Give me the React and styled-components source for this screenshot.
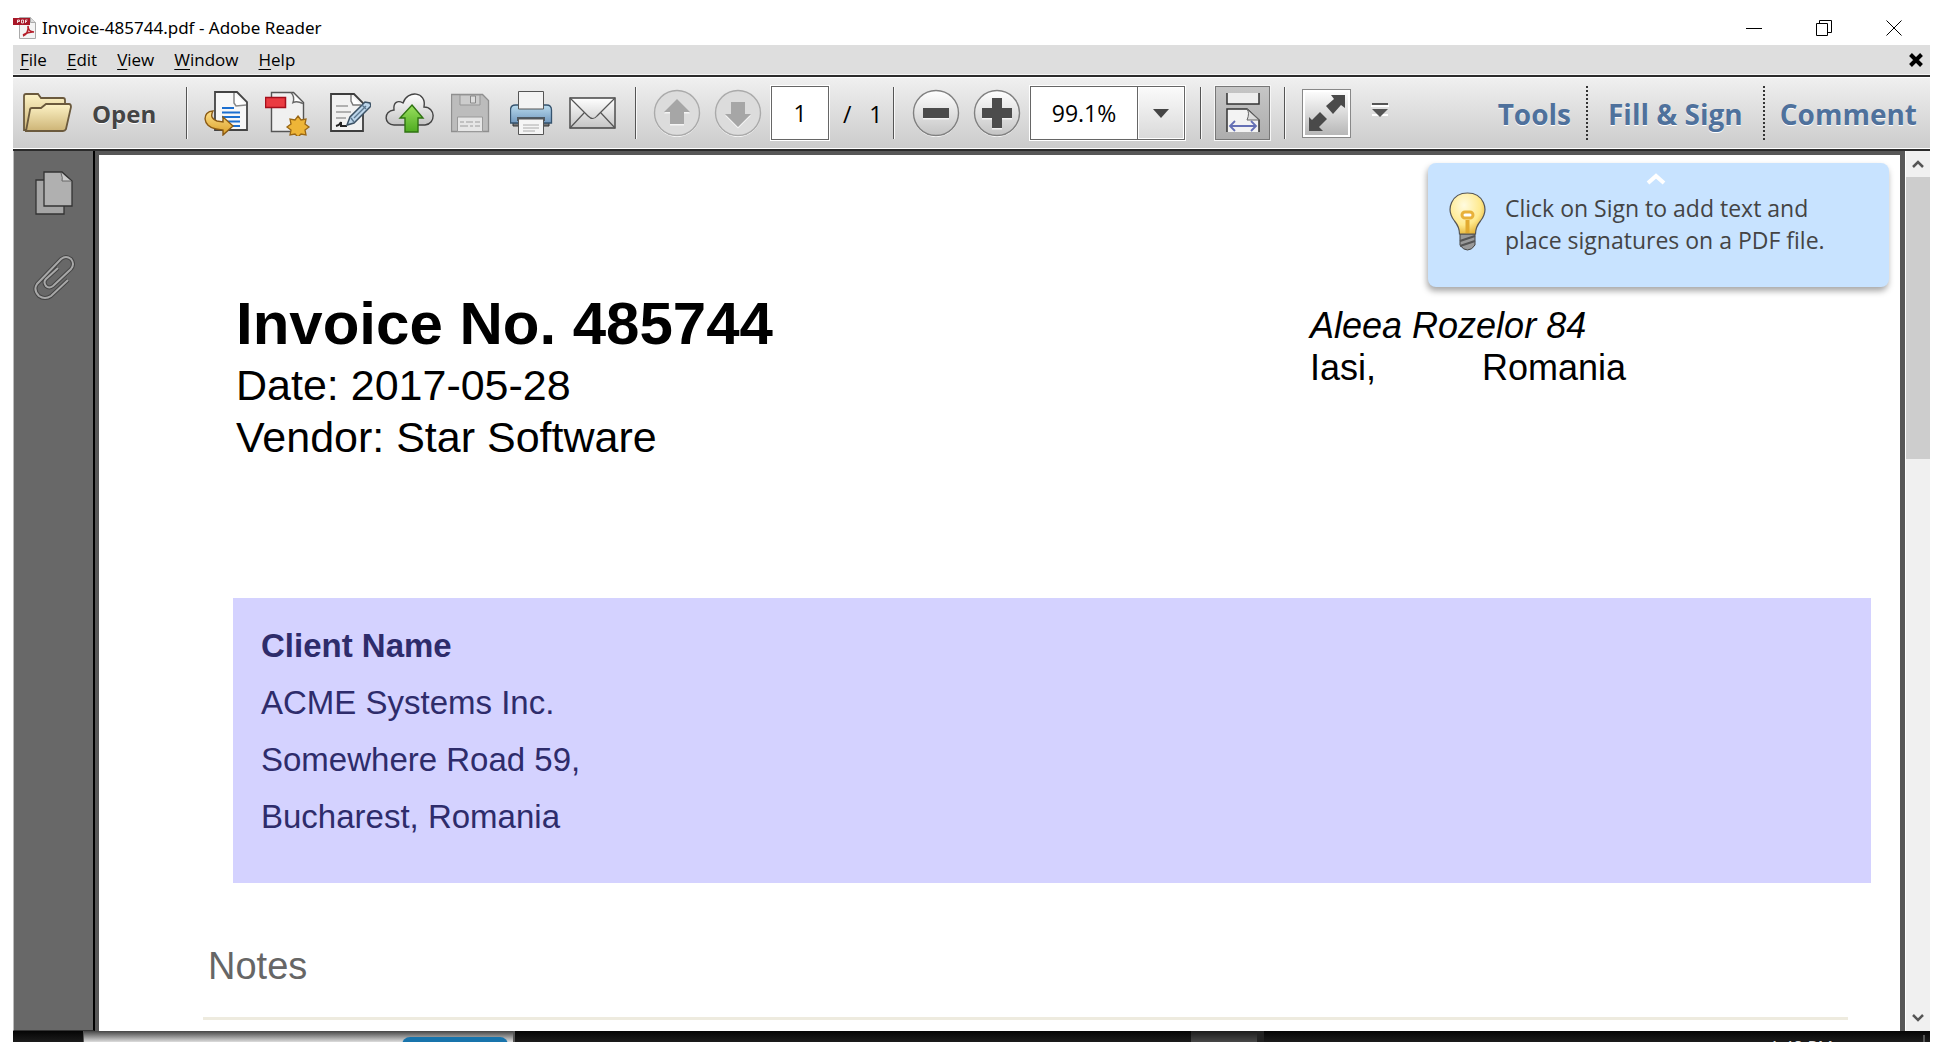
import React from "react";
import styled, { createGlobalStyle } from "styled-components";

const ui = `"Open Sans", "Noto Sans", sans-serif`;
const paper = `"Liberation Sans", Arial, sans-serif`;

const Global = createGlobalStyle`
  * { box-sizing: border-box; }
  body { margin: 0; background: #fff; }
  button, input { font: inherit; color: inherit; margin: 0; }
  button { border: 0; background: none; padding: 0; }
`;

const Screen = styled.div`
  display: flex;
  flex-direction: column;
  height: 100vh;
  padding: 0 12px 0 13px;
  overflow: hidden;
  font-family: ${ui};
  color: #000;
`;

const Window = styled.div`
  flex: 1;
  min-height: 0;
  display: flex;
  flex-direction: column;
`;

const TitleBar = styled.header`
  flex: none;
  display: flex;
  align-items: center;
  height: 45px;
  padding-top: 11px;
`;

const TitleText = styled.h1`
  margin: 0 0 0 5px;
  font-family: "Noto Sans", sans-serif;
  font-size: 17px;
  font-weight: 400;
  line-height: 24px;
`;

const WindowControls = styled.div`
  display: flex;
  gap: 38px;
  margin-left: auto;
  padding-right: 20px;
`;

const ControlButton = styled.button`
  display: flex;
  justify-content: center;
  width: 32px;
`;

const MenuBar = styled.nav`
  flex: none;
  display: flex;
  align-items: center;
  gap: 20px;
  height: 30px;
  padding: 0 7px;
  background: #dedede;
  border-bottom: 1px solid #f4f4f4;
`;

const MenuItem = styled.button`
  font-size: 17px;
  line-height: 24px;
  text-underline-offset: 3px;
`;

const CloseDocument = styled.button`
  display: flex;
  margin-left: auto;
`;

const Toolbar = styled.div`
  flex: none;
  display: flex;
  align-items: center;
  height: 76px;
  border-top: 2px solid #2b2b2b;
  border-bottom: 2px solid #2b2b2b;
  background: linear-gradient(#f0f0f0, #cbcbcb);
  box-shadow: inset 0 1px #fff, inset 0 -1px #fff;
`;

const Separator = styled.div`
  flex: none;
  width: 2px;
  height: 52px;
  background: #555;
  border-right: 1px solid #f8f8f8;
`;

const Group = styled.div`
  display: flex;
  align-items: center;
  padding: 0 ${(p) => p.$right || 0}px 0 ${(p) => p.$left || 0}px;
`;

const OpenButton = styled.button`
  display: flex;
  align-items: center;
  gap: 20px;
  width: 173px;
  padding-left: 10px;
  color: #444;
  font-size: 24px;
  font-weight: 700;
  text-shadow: 0 1px #fff;
`;

const IconButton = styled.button`
  display: flex;
  justify-content: center;
  width: 61px;
`;

const field = `
  border: 1px solid #666;
  outline: 1px solid #fff;
  background: #fff;
`;

const PageInput = styled.input`
  ${field}
  width: 58px;
  height: 54px;
  margin-left: 3px;
  padding: 0;
  font-size: 23px;
  text-align: center;
`;

const PageCount = styled.span`
  width: 64px;
  padding: 2px 0 0 14px;
  font-size: 23px;
  white-space: pre;
`;

const ZoomBox = styled.div`
  ${field}
  display: flex;
  width: 155px;
  height: 54px;
  margin-left: 3px;
`;

const ZoomInput = styled.input`
  width: 107px;
  padding: 0;
  border: 0;
  border-right: 1px solid #666;
  font-size: 23px;
  text-align: center;
`;

const ZoomArrow = styled.button`
  flex: 1;
  display: flex;
  align-items: center;
  justify-content: center;
  border: 1px solid #fff;
  background: linear-gradient(#fafafa, #dadada);
`;

const FitWidth = styled.button`
  display: flex;
  align-items: center;
  justify-content: center;
  width: 55px;
  height: 54px;
  border: 1px solid #777;
  outline: 1px solid #f6f6f6;
  background: linear-gradient(#c6c6c6, #adadad);
`;

const FullScreen = styled.button`
  display: flex;
  align-items: center;
  justify-content: center;
  width: 49px;
  height: 49px;
  margin-right: 20px;
  border: 1px solid #888;
  background: linear-gradient(#fff, #b4b4b4);
  box-shadow: inset 0 0 0 2px #fff;
`;

const Panels = styled.div`
  display: flex;
  align-items: center;
  margin-left: auto;
`;

const PanelButton = styled.button`
  height: 54px;
  padding: 2px ${(p) => (p.$wide ? 20 : 15)}px 0;
  color: #4f719c;
  font-size: 28px;
  line-height: 50px;
  font-weight: 700;
  text-shadow: 0 1px #fff;

  & + & { border-left: 2px dotted #333; }
  &:last-child { padding-right: 13px; }
`;

const Body = styled.div`
  flex: 1;
  min-height: 0;
  display: flex;
`;

const Sidebar = styled.aside`
  flex: none;
  display: flex;
  flex-direction: column;
  align-items: center;
  gap: 33px;
  width: 82px;
  padding: 19px 0 0;
  background: #686868;
  border: solid;
  border-width: 0 2px 1px 1px;
  border-color: #000 #000 #333 #bbb;
`;

const Viewer = styled.main`
  flex: 1;
  position: relative;
  min-width: 0;
  overflow: hidden;
  border: solid #575757;
  border-width: 4px 5px 0 4px;
  background: #fff;
  font-family: ${paper};
`;

const InvoiceHead = styled.section`
  display: flex;
  justify-content: space-between;
  padding: 134px 274px 0 137px;
`;

const InvoiceTitle = styled.h2`
  margin: 0;
  font-size: 60px;
  line-height: 70px;
`;

const InvoiceLine = styled.p`
  margin: 0;
  font-size: 43px;
  line-height: 52px;
`;

const Address = styled.address`
  width: 316px;
  padding-top: 16px;
  font-size: 36px;
  line-height: 42px;
  font-style: normal;
`;

const City = styled.div`
  display: flex;
  justify-content: space-between;
`;

const ClientBox = styled.section`
  height: 285px;
  margin: 135px 29px 0 134px;
  padding: 19px 28px;
  background: #d4d2ff;
  color: #2e2c6b;
  font-size: 33px;
  line-height: 57px;

  h3, p { margin: 0; font-size: inherit; }
`;

const Notes = styled.section`
  margin: 58px 52px 0 104px;
  border-bottom: 3px solid #eeebdf;

  h3 {
    margin: 0;
    padding: 0 5px 26px;
    color: #666;
    font: 400 38px/50px "Liberation Sans Narrow", ${paper};
  }
`;

const Tip = styled.aside`
  position: absolute;
  top: 8px;
  right: 11px;
  display: flex;
  gap: 19px;
  width: 461px;
  height: 124px;
  padding: 29px 21px 0;
  border-radius: 8px;
  background: #c8e3ff;
  box-shadow: -1px 4px 6px rgba(0, 0, 0, 0.35);
  color: #444;
  font-family: ${ui};
  font-size: 23px;
  line-height: 32px;

  p { margin: 0; white-space: nowrap; }
`;

const TipCaret = styled.svg`
  position: absolute;
  top: 10px;
  left: 218px;
`;

const ScrollBar = styled.div`
  flex: none;
  display: flex;
  flex-direction: column;
  width: 25px;
  background: #f0f0f0;
  border-left: 1px solid #fff;
`;

const ScrollButton = styled.button`
  display: flex;
  align-items: center;
  justify-content: center;
  height: 26px;
`;

const ScrollTrack = styled.div`
  flex: 1;
`;

const ScrollThumb = styled.div`
  height: 34%;
  background: #cdcdcd;
`;

const Desktop = styled.footer`
  flex: none;
  display: flex;
  height: 11px;
  overflow: hidden;
  background: linear-gradient(#050505, #1c1c1c);
`;

const DesktopWindow = styled.div`
  width: 432px;
  height: 100%;
  margin-left: 70px;
  padding: 6px 5px 0 0;
  border: solid #555;
  border-width: 0 2px 0 1px;
  background: linear-gradient(#444, #ddd);
`;

const DesktopPill = styled.div`
  width: 106px;
  height: 20px;
  margin-left: auto;
  border-radius: 8px;
  background: #1874ac;
`;

const TaskButton = styled.div`
  width: 73px;
  margin-left: auto;
  border-right: 7px solid #222;
  background: linear-gradient(#1c1c1c, #484848);
`;

const Clock = styled.time`
  margin: 4px 5px 0 505px;
  padding-right: 90px;
  border-right: 2px solid #555;
  color: #ddd;
  font-size: 17px;
  line-height: 24px;
  white-space: nowrap;
`;

const PdfIcon = () => (
  <svg width="24" height="24" viewBox="0 0 24 24" aria-hidden="true">
    <path d="M6.5 1.5h11l5 5v16h-16z" fill="#f4f4f4" stroke="#aaa" />
    <path d="M17.500 1.500v5h5" fill="#ddd" stroke="#aaa" />
    <path d="M0 2h17v7H0z" fill="#a81828" />
    <path d="M4.500 7V4h2v1.500h-2M8.500 4v3h2V4zM12.500 7V4h2M12.500 5.500h1.500" fill="none" stroke="#fff" strokeWidth=".8" />
    <path d="M10 20c3-1 6-5 5-10 0 3 2 6 6 6-4-.5-7 .5-11 3" fill="none" stroke="#b5202c" strokeWidth="1.600" />
  </svg>
);

const FolderIcon = () => (
  <svg width="49" height="40" viewBox="0 0 49 40" aria-hidden="true">
    <defs>
      <linearGradient id="fold" x1="0" y1="0" x2="0" y2="1"><stop stopColor="#fdf3c6" /><stop offset="1" stopColor="#cdb476" /></linearGradient>
    </defs>
    <path d="M1 37V3q0-2 2-2h12l3 4h22q2 0 2 2v10l-5 20z" fill="url(#fold)" stroke="#6b5a3d" strokeWidth="1.800" />
    <path d="M3 38 7 17q0-2 2-2h9l5-4h23q2 0 2 3l-5 22q-1 2-3 2z" fill="url(#fold)" stroke="#6b5a3d" strokeWidth="1.800" />
  </svg>
);

const ExportIcon = () => (
  <svg width="46" height="46" viewBox="1 0 46 46" aria-hidden="true">
    <defs><linearGradient id="gold" x1="0" y1="0" x2="0" y2="1"><stop stopColor="#ffe089" /><stop offset="1" stopColor="#d99f28" /></linearGradient></defs>
    <path d="M12 2h22l10 10v28H12z" fill="#f7f7f7" stroke="#444" strokeWidth="1.800" />
    <path d="M31 3v10l2 3 10-1" fill="#fff" stroke="#888" strokeWidth="1.500" />
    <path d="M19 18h12M19 22.500h18M19 27h18M19 31.500h18M27 36h10" stroke="#1c6fd0" strokeWidth="2" />
    <path d="M10 21C-1 21-1 37 13 39l7 1v5l10-9-10-9v5l-6-1q-8-3-4-10z" fill="url(#gold)" stroke="#8a5a14" strokeWidth="1.400" />
  </svg>
);

const CreateIcon = () => (
  <svg width="46" height="46" viewBox="2 0 46 46" aria-hidden="true">
    <path d="M8.500 2.500h22l10 10v29h-32z" fill="#f0f0f0" stroke="#555" strokeWidth="1.400" />
    <path d="M28 2.500q4 4 2 10 4-2 10 1" fill="#fff" stroke="#666" strokeWidth="1.400" />
    <path d="M2.500 7.500h20v10h-20z" fill="#ea3b41" stroke="#a50f1c" strokeWidth="1.500" />
    <path d="m35 26 3 4 5-1-1 5 4 3-4 3 1 5-5-1-3 3-3-3-5 1 1-5-4-3 4-3-1-5 5 1z" fill="#eeb537" stroke="#9a6715" strokeWidth="1.300" />
  </svg>
);

const EditIcon = () => (
  <svg width="44" height="44" viewBox="-2 0 44 44" aria-hidden="true">
    <path d="M2 3h23l9 9v28H2z" fill="#f1f1f1" stroke="#3d3d3d" strokeWidth="1.800" />
    <path d="M22 4v6l2 4h8" fill="#fff" stroke="#777" strokeWidth="1.400" />
    <path d="M7 15h12M7 21h15M7 27h10" stroke="#b0b0b0" strokeWidth="2" />
    <path d="M7 35q4-1 5-4v4h6" fill="none" stroke="#222" strokeWidth="2" />
    <path d="m18 34 3-8 15-15 5 1 1 3-17 17z" fill="#bcd5ea" stroke="#3c5265" strokeWidth="1.500" />
    <path d="m22 27 3 4M33 14l4 4M25 27l12-12" stroke="#5c7890" strokeWidth="1.400" />
  </svg>
);

const CloudIcon = () => (
  <svg width="50" height="42" viewBox="0 0 50 42" aria-hidden="true">
    <defs>
      <linearGradient id="cloud" x1="0" y1="0" x2="0" y2="1"><stop stopColor="#fff" /><stop offset="1" stopColor="#c4c4c4" /></linearGradient>
      <linearGradient id="green" x1="0" y1="0" x2="0" y2="1"><stop stopColor="#9be060" /><stop offset="1" stopColor="#4eab20" /></linearGradient>
    </defs>
    <path d="M9 33C-1 33-2 19 9 18 8 10 13 8 18 11 22-2 42-1 39 15c12 0 12 17 1 18z" fill="url(#cloud)" stroke="#444" strokeWidth="1.400" />
    <path d="M27 13 38 26h-5v14H20V26h-5z" fill="url(#green)" stroke="#2f7312" strokeWidth="1.400" />
  </svg>
);

const SaveIcon = () => (
  <svg width="40" height="40" viewBox="1 0 40 40" aria-hidden="true">
    <path d="M1.500 1.500h31l6 6v31h-37z" fill="#bcbcbc" stroke="#8f8f8f" strokeWidth="1.300" />
    <path d="M10 2h20v10H10z" fill="#ccc" stroke="#959595" />
    <path d="M20.500 3h5v7h-5z" fill="#ddd" stroke="#888" />
    <path d="M7.500 24h25v14.500h-25z" fill="#e6e6e6" stroke="#999" />
    <path d="M10 29h4m2 0h7m2 0h5M10 33h8m2 0h3m2 0h5" stroke="#b5b5b5" strokeWidth="1.500" />
  </svg>
);

const PrintIcon = () => (
  <svg width="44" height="46" viewBox="1 0 44 46" aria-hidden="true">
    <defs><linearGradient id="blue" x1="0" y1="0" x2="0" y2="1"><stop stopColor="#b9dbee" /><stop offset="1" stopColor="#7299bf" /></linearGradient></defs>
    <path d="M4 31h36v5H4z" fill="#777" stroke="#333" />
    <path d="M1.500 33V20q0-5 5-5h31q5 0 5 5v13z" fill="url(#blue)" stroke="#35536e" strokeWidth="1.300" />
    <path d="M9.500 1.500h25V19h-25z" fill="#f3f3f3" stroke="#555" />
    <path d="M8 27h28v4H8z" fill="#4d5963" />
    <path d="M9.500 29h25v15.500h-25z" fill="#f5f5f5" stroke="#555" />
    <path d="M14 35h16M14 38h16M14 41h12" stroke="#aaa" />
  </svg>
);

const MailIcon = () => (
  <svg width="47" height="32" viewBox="0 0 47 32" aria-hidden="true">
    <path d="M1 1h45v30H1z" fill="url(#cloud)" stroke="#444" strokeWidth="1.400" />
    <path d="m1 1 18 18q5 5 9 0L46 1M1 31l14-15M46 31 32 16" fill="none" stroke="#555" strokeWidth="1.200" />
  </svg>
);

const RoundIcon = ({ faded, d }) => (
  <svg width="48" height="48" viewBox="0 0 48 48" aria-hidden="true">
    <circle cx="24" cy="25" r="22.500" fill="none" stroke="#fff" />
    <circle cx="24" cy="24" r="22.500" fill={faded ? "#dcdcdc" : "url(#cloud)"} stroke={faded ? "#aaa" : "#808080"} strokeWidth="1.400" />
    <path d={d} fill="#fff" transform="translate(0 1.500)" opacity=".7" />
    <path d={d} fill={faded ? "#a6a6a6" : "#4c4c4c"} />
  </svg>
);

const FitIcon = () => (
  <svg width="36" height="44" viewBox="0 0 36 44" aria-hidden="true">
    <path d="M2 2v11h32V2" fill="#eee" stroke="#333" strokeWidth="1.500" />
    <path d="M2 41V18h20l12 11v12" fill="#f3f3f3" stroke="#333" strokeWidth="1.500" />
    <path d="M22 18q3 4 0 11h12z" fill="#ddd" stroke="#666" />
    <path d="M5 35h26M10 30l-5 5 5 5M26 30l5 5-5 5" fill="none" stroke="#6570b5" strokeWidth="1.800" />
  </svg>
);

const ExpandIcon = () => (
  <svg width="38" height="38" viewBox="0 0 38 38" aria-hidden="true">
    <path d="M23 1h14v13l-4-3-8 9-7-8 8-7zM1 37h14l-4-4 8-8-7-7-8 8-3-3z" fill="#4a4a4a" />
  </svg>
);

const BulbIcon = () => (
  <svg width="37" height="60" viewBox="0 0 37 60" aria-hidden="true">
    <defs><radialGradient id="bulb" cx=".4" cy=".3" r=".8"><stop stopColor="#fffbe0" /><stop offset=".6" stopColor="#ffe98c" /><stop offset="1" stopColor="#dfa520" /></radialGradient></defs>
    <path d="M11 42h15v11q-3 5-7.500 5T11 53z" fill="#999" stroke="#444" />
    <path d="m11 49 15-5M11 54l15-5" stroke="#555" strokeWidth="2" />
    <path d="M10.500 42q0-7-5-13C-4 17 3 1 18.500 1S41 17 31.500 29q-5 6-5 13z" fill="url(#bulb)" stroke="#555" strokeWidth="1.200" />
    <rect x="13" y="20" width="11" height="6" rx="3" fill="#fff" stroke="#e8b13a" strokeWidth="3" />
    <path d="M18.500 28v13" stroke="#e2aa30" strokeWidth="4" />
  </svg>
);

const PagesIcon = () => (
  <svg width="40" height="46" viewBox="0 0 40 46" aria-hidden="true">
    <path d="M2 10h28v34H2z" fill="#a5a5a5" stroke="#333" strokeWidth="1.300" />
    <path d="M10 2h18l10 9v25H10z" fill="#b0b0b0" stroke="#333" strokeWidth="1.300" />
    <path d="M27 3q2 5 1 8h9" fill="#ccc" stroke="#666" />
  </svg>
);

const clipPath = "M35 26 18 42q-6 4-12 0-6-6-2-12L28 5q5-4 10 0 4 5 0 10L20 32q-4 3-7 0-3-4 0-7l12-11";
const ClipIcon = () => (
  <svg width="42" height="46" viewBox="0 0 42 46" aria-hidden="true">
    <path d={clipPath} fill="none" stroke="#444" strokeWidth="4" />
    <path d={clipPath} fill="none" stroke="#a8a8a8" strokeWidth="2" />
  </svg>
);

const Chevron = ({ down }) => (
  <svg width="12" height="10" viewBox="0 0 12 10" aria-hidden="true">
    <path d={down ? "m1 2 5 5 5-5" : "m1 8 5-5 5 5"} fill="none" stroke="#555" strokeWidth="2.500" />
  </svg>
);

const actions = [
  ["Export PDF", ExportIcon],
  ["Create PDF", CreateIcon],
  ["Edit PDF", EditIcon],
  ["Upload", CloudIcon],
  ["Save", SaveIcon],
  ["Print", PrintIcon],
  ["Email", MailIcon],
];

export default function App() {
  return (
    <Screen>
      <Global />
      <Window>
        <TitleBar>
          <PdfIcon />
          <TitleText>Invoice-485744.pdf - Adobe Reader</TitleText>
          <WindowControls>
            <ControlButton aria-label="Minimize">
              <svg width="16" height="16"><path d="M0 8.500h16" stroke="#000" /></svg>
            </ControlButton>
            <ControlButton aria-label="Restore">
              <svg width="16" height="16"><path d="M.5 3.500h11v12H.5zM3.500 3.500v-3h12v12h-4" fill="none" stroke="#000" /></svg>
            </ControlButton>
            <ControlButton aria-label="Close">
              <svg width="16" height="16"><path d="m.5.5 15 15m0-15-15 15" stroke="#000" /></svg>
            </ControlButton>
          </WindowControls>
        </TitleBar>

        <MenuBar aria-label="Application menu">
          {["File", "Edit", "View", "Window", "Help"].map((name) => (
            <MenuItem key={name}><u>{name[0]}</u>{name.slice(1)}</MenuItem>
          ))}
          <CloseDocument aria-label="Close document">
            <svg width="14" height="14"><path d="m1.500 1.500 11 11m0-11-11 11" stroke="#000" strokeWidth="4" /></svg>
          </CloseDocument>
        </MenuBar>

        <Toolbar>
          <OpenButton><FolderIcon />Open</OpenButton>
          <Separator />
          <Group $left={8} $right={12}>
            {actions.map(([name, Icon]) => (
              <IconButton key={name} aria-label={name}><Icon /></IconButton>
            ))}
          </Group>
          <Separator />
          <Group $left={9}>
            <IconButton aria-label="Previous page"><RoundIcon faded d="M24 10 37 23h-6v12H17V23h-6z" /></IconButton>
            <IconButton aria-label="Next page"><RoundIcon faded d="M24 38 37 25h-6V13H17v12h-6z" /></IconButton>
            <PageInput aria-label="Page number" defaultValue="1" />
            <PageCount>{"/   1"}</PageCount>
          </Group>
          <Separator />
          <Group $left={10} $right={15}>
            <IconButton aria-label="Zoom out"><RoundIcon d="M11 19h26v10H11z" /></IconButton>
            <IconButton aria-label="Zoom in"><RoundIcon d="M19 9h10v10h10v10H29v10H19V29H9V19h10z" /></IconButton>
            <ZoomBox>
              <ZoomInput aria-label="Zoom level" defaultValue="99.1%" />
              <ZoomArrow aria-label="Zoom levels">
                <svg width="16" height="9"><path d="M0 0h16L8 9z" fill="#444" /></svg>
              </ZoomArrow>
            </ZoomBox>
          </Group>
          <Separator />
          <Group $left={13} $right={14}>
            <FitWidth aria-label="Fit width"><FitIcon /></FitWidth>
          </Group>
          <Separator />
          <Group $left={16}>
            <FullScreen aria-label="Full screen"><ExpandIcon /></FullScreen>
            <button aria-label="More tools">
              <svg width="18" height="18"><path d="M0 4h18M1 13h16" stroke="#fff" strokeWidth="2" /><path d="M1 1h16v2H1zM1 7h16l-8 8z" fill="#555" /></svg>
            </button>
          </Group>
          <Panels>
            <PanelButton>Tools</PanelButton>
            <PanelButton $wide>Fill &amp; Sign</PanelButton>
            <PanelButton>Comment</PanelButton>
          </Panels>
        </Toolbar>

        <Body>
          <Sidebar>
            <button aria-label="Page thumbnails"><PagesIcon /></button>
            <button aria-label="Attachments"><ClipIcon /></button>
          </Sidebar>
          <Viewer>
            <InvoiceHead>
              <div>
                <InvoiceTitle>Invoice No. 485744</InvoiceTitle>
                <InvoiceLine>Date: 2017-05-28</InvoiceLine>
                <InvoiceLine>Vendor: Star Software</InvoiceLine>
              </div>
              <Address>
                <i>Aleea Rozelor 84</i>
                <City><span>Iasi,</span><span>Romania</span></City>
              </Address>
            </InvoiceHead>
            <ClientBox>
              <h3>Client Name</h3>
              <p>ACME Systems Inc.</p>
              <p>Somewhere Road 59,</p>
              <p>Bucharest, Romania</p>
            </ClientBox>
            <Notes><h3>Notes</h3></Notes>
            <Tip>
              <TipCaret width="20" height="12"><path d="m2 10 8-7 8 7" fill="none" stroke="#fff" strokeWidth="4" /></TipCaret>
              <BulbIcon />
              <p>Click on Sign to add text and<br />place signatures on a PDF file.</p>
            </Tip>
          </Viewer>
          <ScrollBar>
            <ScrollButton aria-label="Scroll up"><Chevron /></ScrollButton>
            <ScrollTrack><ScrollThumb /></ScrollTrack>
            <ScrollButton aria-label="Scroll down"><Chevron down /></ScrollButton>
          </ScrollBar>
        </Body>
      </Window>
      <Desktop>
        <DesktopWindow><DesktopPill /></DesktopWindow>
        <TaskButton />
        <Clock>1:48 PM</Clock>
      </Desktop>
    </Screen>
  );
}
